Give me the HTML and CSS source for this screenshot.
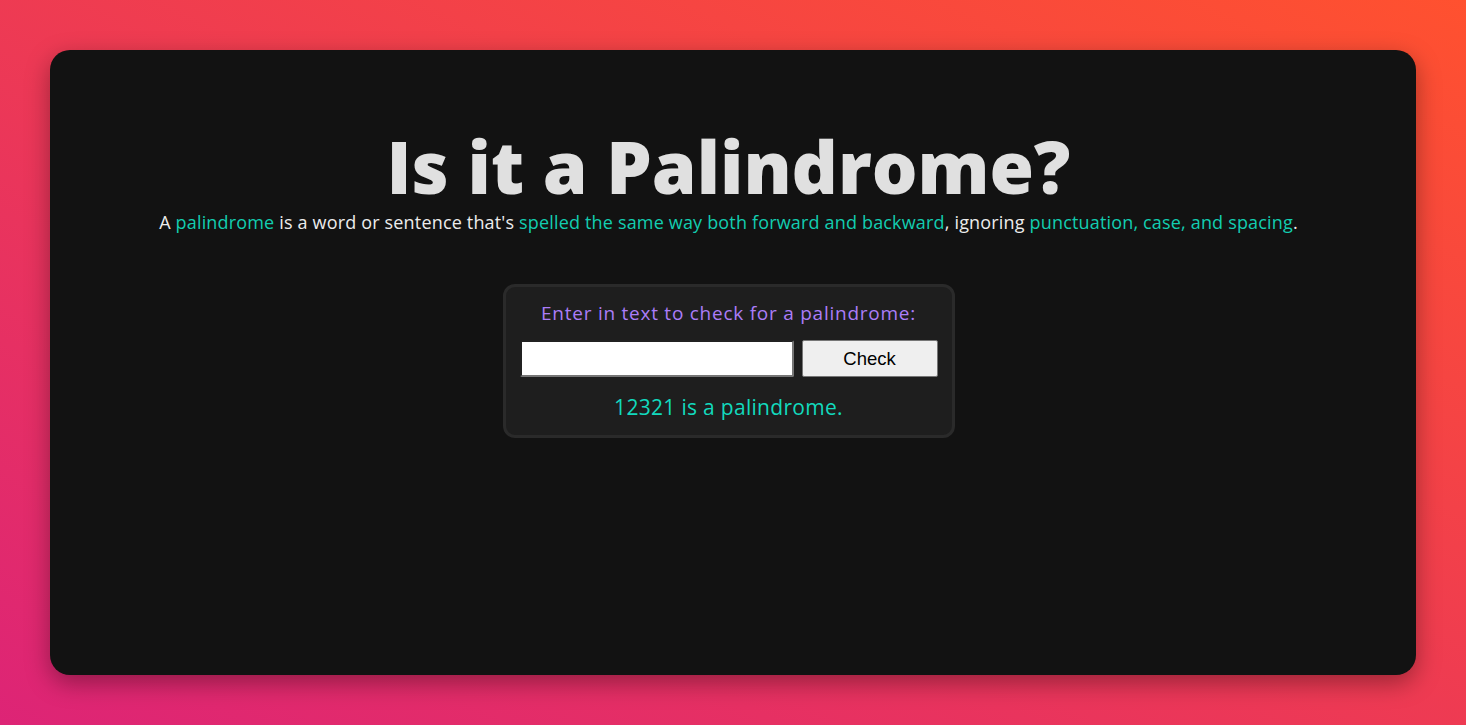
FILE: index.html
```html
<!DOCTYPE html>
<html lang="en">
<head>
<meta charset="utf-8">
<title>Is it a Palindrome?</title>
<link rel="stylesheet" href="styles.css">
</head>
<body>
<main class="card">
  <h1 class="title">Is it a Palindrome?</h1>
  <p class="intro">A <span class="hl">palindrome</span> is a word or sentence that's <span class="hl">spelled the same way both forward and backward</span>, ignoring <span class="hl">punctuation, case, and spacing</span>.</p>
  <section class="checker">
    <label class="checker-label" for="text-input">Enter in text to check for a palindrome:</label>
    <div class="checker-row">
      <input id="text-input" class="checker-input" type="text">
      <button class="checker-btn" type="button">Check</button>
    </div>
    <p class="result">12321 is a palindrome.</p>
  </section>
</main>
</body>
</html>
```

FILE: styles.css
```css
html, body {
  margin: 0;
  height: 100%;
}
body {
  background: linear-gradient(to top right, #dd2476, #ff512f);
  font-family: "Open Sans", "DejaVu Sans", sans-serif;
  padding: 50px;
  box-sizing: border-box;
  height: 725px;
  overflow: hidden;
}
.card {
  background: #121212;
  border-radius: 20px;
  height: 625px;
  box-shadow: 0 8px 24px rgba(0, 0, 0, 0.35);
  display: flex;
  flex-direction: column;
  align-items: center;
  padding: 76px 9px 0 0;
  box-sizing: border-box;
}
.title {
  margin: 0;
  color: #e0e0e0;
  font-size: 72px;
  font-weight: 800;
  line-height: 80px;
}
.intro {
  margin: 4px 0 0;
  color: #ececec;
  font-size: 18px;
  line-height: 24px;
  font-weight: 500;
  letter-spacing: 0.17px;
  white-space: nowrap;
}
.hl {
  color: #12cdb0;
}
.checker {
  margin-top: 50px;
  background: #1e1e1e;
  border: 3px solid #2a2a2a;
  border-radius: 12px;
  width: 452px;
  box-sizing: border-box;
  padding: 14px 14px 15px;
  display: flex;
  flex-direction: column;
  align-items: center;
}
.checker-label {
  color: #ab7df8;
  font-size: 19px;
  line-height: 24px;
  letter-spacing: 0.75px;
  white-space: nowrap;
}
.checker-row {
  display: flex;
  gap: 8px;
  margin-top: 15px;
}
.checker-input {
  width: 274px;
  height: 37px;
  box-sizing: border-box;
  margin: 0;
  border: 2px inset #767676;
  border-radius: 2px;
  background: #fff;
}
.checker-btn {
  width: 136px;
  height: 37px;
  margin: 0;
  box-sizing: border-box;
  font-family: "Liberation Sans", Arial, sans-serif;
  font-size: 18.5px;
  color: #000;
  background: #efefef;
  border: 1px solid #767676;
  border-radius: 2px;
}
.result {
  margin: 17px 0 0;
  color: #12d9bd;
  font-size: 21px;
  line-height: 26px;
  letter-spacing: 0.3px;
  white-space: nowrap;
}
```
